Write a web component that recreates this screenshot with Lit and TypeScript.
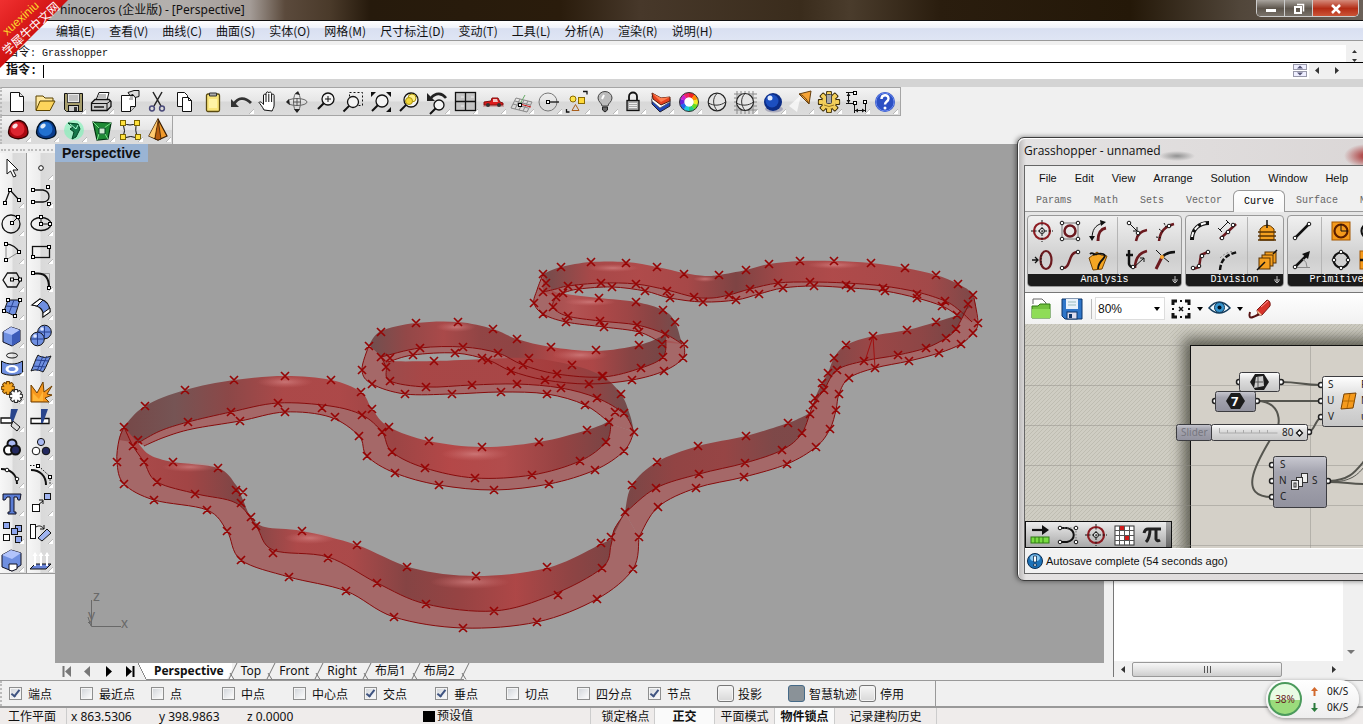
import { LitElement, html, svg, css } from "lit";
import { customElement } from "lit/decorators.js";
import { classMap } from "lit/directives/class-map.js";

type P = [number, number];

/* ---------- geometry helpers ---------- */

const parse = (s: string): P[] => s.trim().split(/\s+/).map((p) => p.split(",").map(Number) as P);

function curve(pts: P[], lead = "M"): string {
  let d = `${lead}${pts[0][0]},${pts[0][1]}`;
  for (let i = 0; i < pts.length - 1; i++) {
    const a = pts[i - 1] ?? pts[i];
    const b = pts[i];
    const c = pts[i + 1];
    const e = pts[i + 2] ?? c;
    const f = (n: number) => n.toFixed(1);
    d += `C${f(b[0] + (c[0] - a[0]) / 6)},${f(b[1] + (c[1] - a[1]) / 6)} ${f(c[0] - (e[0] - b[0]) / 6)},${f(c[1] - (e[1] - b[1]) / 6)} ${c[0]},${c[1]}`;
  }
  return d;
}

const band = (a: P[], b: P[]) => curve(a) + curve([...b].reverse(), "L") + "Z";

/* ---------- ribbon surface: wall (top/foot) and flange (foot/rim) ---------- */

interface Section { top: P[]; foot: P[]; rim: P[]; tone: string; }

const sections: Section[] = [
  {
    tone: "t1",
    top: parse("543,274 561,267 591,262 626,262 657,267 684,273 705,276 719,275 746,270 769,264 800,261 834,261 871,263 905,268 936,275 958,284 973,295 977,318"),
    foot: parse("543,292 556,289 568,286 601,283 636,284 667,290 694,297 712,298 729,295 750,289 778,283 810,282 846,283 883,286 917,292 945,301 959,310 972,322"),
    rim: parse("556,297 563,293 579,289 612,287 645,291 670,298 703,302 736,300 759,294 783,288 814,286 851,288 885,291 917,298 942,306 957,315"),
  },
  {
    tone: "t7",
    top: parse("546,283 553,291 566,294 599,298 636,302 663,310 675,322 682,344"),
    foot: parse("556,297 553,307 567,316 600,321 637,325 665,334 682,344"),
    rim: parse("543,274 537,290 534,303 543,314 566,322 604,327 639,332 660,342"),
  },
  {
    tone: "t6",
    top: parse("369,345 381,331 416,323 458,322 493,329 517,339 551,347 596,351 639,345 662,336 667,332"),
    foot: parse("381,357 420,348 463,347 498,353 523,365 557,374 603,377 641,368 663,357 666,340"),
    rim: parse("388,362 413,355 455,353 488,360 511,371 545,380 589,384 632,380 664,371 683,358 684,344"),
  },
  {
    tone: "t4",
    top: parse("119,440 124,427 145,406 185,390 234,380 285,376 331,380 361,392 372,409 389,427 429,441 482,447 539,442 587,430 609,421 614,413"),
    foot: parse("138,443 160,431 188,422 231,412 278,403 330,406 362,415 382,432 392,452 425,468 475,478 532,475 580,461 606,442 611,424"),
    rim: parse("144,446 165,437 192,429 240,421 285,412 330,417 359,436 367,456 395,473 439,485 494,490 549,484 595,470 624,451 634,432"),
  },
  {
    tone: "t5",
    top: parse("382,357 391,361 434,361 488,359 529,358 572,365 602,376 621,394 630,415 634,432"),
    foot: parse("381,357 386,367 390,381 426,387 472,385 517,384 561,388 597,398 624,414 634,432"),
    rim: parse("369,345 362,370 372,384 405,394 452,394 501,392 547,394 585,405 611,424"),
  },
  {
    tone: "t2",
    top: parse("972,306 957,315 936,322 907,330 873,336 846,345 834,358 828,373 822,383 815,398 810,412 800,418 788,423 746,436 698,446 657,462 632,485 625,512"),
    foot: parse("968,306 956,329 946,338 926,348 898,355 864,361 837,370 824,390 813,405 802,433 782,450 745,463 699,474 656,488 625,513"),
    rim: parse("974,298 978,323 973,333 961,344 939,353 909,361 875,368 849,378 839,394 836,410 830,429 816,447 787,464 744,477 696,488 658,507 639,537"),
  },
  {
    tone: "t3",
    top: parse("625,512 612,537 601,544 547,568 476,576 412,568 357,545 302,531 265,527 251,517 243,500 236,485 218,468 173,462 150,455 138,443 124,427"),
    foot: parse("625,513 614,530 611,545 602,568 552,595 494,611 426,604 377,583 328,557 273,550 256,526 236,503 197,494 157,482 144,462 133,446 124,427"),
    rim: parse("639,537 633,569 597,599 537,622 463,628 394,617 346,591 289,577 241,560 227,531 207,510 154,500 124,484 117,462 119,440 124,427"),
  },
];

const gradients: Record<string, [number, number, string[]]> = {
  t1: [543, 977, ["#704747", "#a84444", "#b04646", "#a74343", "#7c3f3f", "#a24343", "#b04646", "#ab4545", "#a24444", "#784444"]],
  t2: [625, 972, ["#774242", "#913f3f", "#964040", "#7c4444", "#7c4444", "#9b4242", "#8c4141", "#6c4141"]],
  t3: [133, 625, ["#ab4646", "#a24040", "#794141", "#ae4545", "#ab4545", "#843f3f", "#963e3e", "#ae4242", "#8e3f3f", "#744040"]],
  t4: [119, 614, ["#744242", "#735050", "#8b4343", "#ac4444", "#ad4444", "#9b4040", "#b54343", "#b34848", "#963e3e", "#744040"]],
  t5: [382, 634, ["#994848", "#a84242", "#a84242", "#a94242", "#a53d3d", "#924040", "#684a4a"]],
  t6: [369, 667, ["#6d4b4b", "#924343", "#aa4545", "#904040", "#8e3f3f", "#b14343", "#ad4242", "#863f3f", "#704242"]],
  t7: [546, 682, ["#a14a4a", "#b35050", "#ae4444", "#9e4141", "#863f3f", "#6d4b4b"]],
};

const glints: [number, number, number, number][] = [
  [613, 268, 26, 4], [705, 279, 12, 3], [835, 265, 28, 4], [456, 327, 20, 5], [580, 355, 28, 6],
  [590, 302, 26, 4], [285, 382, 28, 6], [475, 454, 34, 7], [190, 467, 28, 5], [310, 538, 26, 6], [470, 582, 40, 7],
];

const marks = parse(`
543,274 561,267 591,262 626,263 657,267 684,274 719,275 746,270 769,264 800,261 834,261 871,263 905,268 936,275 958,284 973,295
546,283 543,292 556,297 563,293 568,286 601,283 636,284 667,291 694,297 729,295 750,289 778,283 810,282 846,285 883,288 917,294 945,301 968,304
579,289 612,287 645,291 670,298 703,302 736,300 759,294 783,288 814,286 851,288 885,291 917,298 942,306 957,315
534,303 543,314 566,322 604,327 639,332 553,307 568,316 600,321 637,325 665,334 599,298 636,302 663,310 675,322 684,344
662,344 639,345 596,350 551,347 517,339 493,329 458,322 416,323 381,332 369,346 381,357 390,358 386,367 420,348 463,347 498,353 523,365 557,374 603,376
641,368 663,357 683,358 664,371 632,380 589,384 545,380 511,371 488,360 482,358 455,353 413,355 434,361 529,358 572,365 602,376 621,394
624,413 615,412 609,422 634,432 624,451 606,442 597,398 561,388 517,384 472,385 426,387 390,381 362,370 372,384 405,394 452,394 501,392 547,394 585,405
587,430 539,442 482,447 429,441 389,427 372,409 361,392 331,380 285,376 234,380 185,390 145,406 124,427 138,440 133,446
117,462 124,484 154,500 207,510 227,531 241,560 289,577 346,591 394,617 463,628 537,622 597,599 633,569 639,537 658,507
144,462 157,482 195,494 218,468 173,462 236,490 243,492 241,503 251,517 256,526 273,553 302,531 357,545 328,558 377,583 407,567 426,604 494,611 558,595 602,568 611,537 601,543 547,567 476,576 625,512
188,422 231,412 278,403 322,408 240,421 285,412 335,417 359,436 362,415 382,432 392,452 367,456 395,473 425,468 439,485 475,478 494,490 532,475 549,484 580,461 595,470
632,485 657,462 698,446 746,436 788,423 810,414 815,398 822,383 828,373 834,358 846,345 873,336 907,330 936,322
656,488 699,474 745,463 782,450 802,433 813,405 824,390 837,370 864,361 898,355 926,348 946,338 956,329
978,323 973,333 961,344 939,353 909,361 875,368 849,378 839,394 836,410 830,429 816,447 787,464 744,477 696,488`);

const scene = () => svg`
  <defs>
    ${Object.entries(gradients).map(([id, [x1, x2, stops]]) => svg`
      <linearGradient id=${id} gradientUnits="userSpaceOnUse" x1=${x1} x2=${x2} y1="0" y2="0">
        ${stops.map((c, i) => svg`<stop offset=${i / (stops.length - 1)} stop-color=${c}></stop>`)}
      </linearGradient>`)}
    <radialGradient id="glint"><stop offset="0" stop-color="#d88c8c" stop-opacity=".65"></stop><stop offset="1" stop-color="#d07070" stop-opacity="0"></stop></radialGradient>
  </defs>
  ${sections.map((s) => svg`
    <path d=${band(s.foot, s.rim)} fill="#a84e4e" fill-opacity=".68"></path>
    <path d=${band(s.top, s.foot)} fill=${`url(#${s.tone})`} fill-opacity=".95"></path>`)}
  ${glints.map(([x, y, rx, ry]) => svg`<ellipse cx=${x} cy=${y} rx=${rx} ry=${ry} fill="url(#glint)"></ellipse>`)}
  ${sections.map((s) => svg`<path d=${curve(s.foot) + curve(s.rim)} fill="none" stroke="#870b0b"></path>`)}
  <path d="M873,336L865,361M873,336L875,368" stroke="#a01010" fill="none"></path>
  <path d=${marks.map(([x, y]) => `M${x - 4},${y - 4}l8,8m0,-8l-8,8`).join("")} stroke="#960404" stroke-width="1.700"></path>
  <g stroke="#696969" fill="none"><path d="M91.500,600V626.500H121M88,617l3,9M92,626l-4,-4"></path></g>
  <g class="axis"><text x="93" y="601">z</text><text x="88" y="620">y</text><text x="121" y="628">x</text></g>`;

/* ---------- icons ---------- */

const K = "#111";
const sq = (x: number, y: number) => svg`<rect x=${x - 1.5} y=${y - 1.5} width="3" height="3" fill="#fff" stroke="#000"></rect>`;
const dot = (x: number, y: number) => svg`<circle cx=${x} cy=${y} r="1.800" fill="#fff" stroke="#111"></circle>`;
const more = (x: number, y: number) => svg`<path d=${`M${x},${y}v-5l-5,5z`} fill="#fff"></path><path d=${`M${x},${y - 5}l-5,5`} stroke="#999" stroke-width=".6"></path>`;
const lens = (x: number, y: number, r: number) => svg`<circle cx=${x} cy=${y} r=${r} fill="#f4f4f4" stroke=${K} stroke-width="1.300"></circle><path d=${`M${x - r * 0.7},${y + r * 0.7}L${x - r - 4},${y + r + 4}`} stroke=${K} stroke-width="2"></path>`;

const cog = (x: number, y: number, r: number, w: number, fill: string, line: string) => {
  const turns = [0, 45, 90, 135, 180, 225, 270, 315];
  const teeth = (c: string, g: number) => turns.map((t) => svg`<rect x=${x - w / 2 - g} y=${y - r - w * 0.8 - g} width=${w + g * 2} height=${w + g * 2} rx="1" fill=${c} transform=${`rotate(${t} ${x} ${y})`}></rect>`);
  return svg`${teeth(line, 0.9)}<circle cx=${x} cy=${y} r=${r + 0.9} fill=${line}></circle>${teeth(fill, 0)}<circle cx=${x} cy=${y} r=${r} fill=${fill}></circle>`;
};

const mainIcons: [string, boolean, unknown][] = [
  ["新建", false, svg`<path d="M7.500,4.500h9l4,4v15h-13z" fill="#fff" stroke=${K}></path><path d="M16.500,4.500v4h4" fill="#ddd" stroke=${K}></path>`],
  ["打开", false, svg`<path d="M5,22V8h7l2,2h8v4" fill="#ffe9a0" stroke="#5b4300"></path><path d="M5,22.500L9,13h15l-5,9.500z" fill="#fcd45c" stroke="#5b4300"></path>`],
  ["保存", true, svg`<path d="M5.500,5.500h18v18h-16l-2,-2z" fill="#a69d6c" stroke=${K}></path><rect x="8.500" y="5.500" width="12" height="9" fill="#e9e9e9" stroke="#444"></rect><path d="M10,8h9M10,10h9M10,12h9" stroke="#999"></path><rect x="9.500" y="17.500" width="10" height="6" fill="#ccc" stroke=${K}></rect><rect x="15" y="19" width="3" height="4" fill="#333"></rect>`],
  ["打印", true, svg`<path d="M9,12L12,4.500h10L20,12z" fill="#fff" stroke=${K}></path><path d="M12,7h7M11,9h8" stroke="#777"></path><path d="M4.500,15L8,11.500h14l2,2v5l-4,4h-15.500z" fill="#ccc" stroke=${K} stroke-width="1.300"></path><path d="M4.500,15.500H20v7M20,15.500l4,-3" fill="none" stroke=${K}></path><path d="M7,19h10" stroke="#444" stroke-width="2"></path>`],
  ["文件属性", false, svg`<path d="M6.500,7.500h14v11l-5,5h-9z" fill="#fff" stroke=${K}></path><path d="M15.500,23.500v-5h5" fill="#ccc" stroke=${K}></path><path d="M13,4.500l6,-2h5v6l-4,1l-2,-3l-3,1z" fill="#ddd" stroke=${K}></path><path d="M15,9h3M14,11h4" stroke="#777"></path>`],
  ["剪切", false, svg`<path d="M10,4L18,18M19,4L11,18" stroke="#222" stroke-width="1.500"></path><circle cx="9" cy="20.500" r="2.400" fill="none" stroke="#4a4a7a" stroke-width="1.500"></circle><circle cx="19" cy="20.500" r="2.400" fill="none" stroke="#4a4a7a" stroke-width="1.500"></circle>`],
  ["复制", false, svg`<path d="M6.500,4.500h7l3,3v11h-10z" fill="#fff" stroke=${K}></path><path d="M11.500,9.500h6l3,3v11h-9z" fill="#fff" stroke=${K}></path><path d="M17.500,9.500v3h3" fill="none" stroke=${K}></path>`],
  ["粘贴", false, svg`<rect x="7.500" y="6" width="13" height="17.500" rx="1.500" fill="#f9e57b" stroke="#5a4a10" stroke-width="1.300"></rect><path d="M10.500,8V5h7v3z" fill="#aaa" stroke="#333"></path><path d="M10,11h8v9h-8z" fill="#fff3a5"></path>`],
  ["撤销", true, svg`<path d="M7,16C11,9 18,9 24,15" fill="none" stroke="#333" stroke-width="2.800"></path><path d="M4,11v8h8z" fill="#333"></path>`],
  ["平移", false, svg`<path d="M9,22C7,18 5,16 4,14.500c1,-1.500 3,0 4.500,2V7c1,-1.500 2.200,-1 2.500,0V5c1,-1.500 2.400,-1.500 2.800,0V5c1,-1.500 2.400,-1 2.800,.500V7c1,-1.300 2.200,-1 2.500,.200V17c0,3 -1.500,4 -2,6z" fill="#fff" stroke=${K}></path><path d="M11,7v7M13.800,6v8M16.600,7v7" stroke=${K}></path>`],
  ["旋转视图", false, svg`<ellipse cx="14" cy="14" rx="10" ry="3.500" fill="none" stroke="#666"></ellipse><ellipse cx="14" cy="14" rx="3.500" ry="9.500" fill="none" stroke="#666"></ellipse><path d="M14,10v8M10,14h8" stroke="#555"></path><path d="M12,6l3,-3l2,4zM11,21l3,4l3,-4zM6,11l-3,3l4,3z" fill="#222"></path>`],
  ["缩放", false, svg`${lens(17, 11, 6)}<path d="M14,11h6M17,8v6" stroke=${K}></path>`],
  ["框选缩放", false, svg`<rect x="10.500" y="4.500" width="13" height="13" fill="none" stroke=${K} stroke-dasharray="2 2"></rect>${lens(14, 14, 5.5)}`],
  ["缩放至范围", false, svg`${lens(15, 13, 6)}<path d="M4,4h5l-5,5zM24,4h-5l5,5zM24,24h-5l5,-5z" fill=${K}></path>`],
  ["缩放至选取", false, svg`${lens(16, 12, 7)}<circle cx="17" cy="10" r="4" fill="#fff08a" stroke="#aa9410"></circle><circle cx="14" cy="13" r="3.500" fill="#f4d937" stroke="#aa9410"></circle>`],
  ["上一个视图", true, svg`${lens(16, 17, 5)}<path d="M8,10C13,4 19,5 23,10" fill="none" stroke="#222" stroke-width="2.600"></path><path d="M4,5v8h8z" fill="#222"></path>`],
  ["四个视图", true, svg`<rect x="4.500" y="4.500" width="20" height="18" fill="#c4c4c4" stroke=${K} stroke-width="1.300"></rect><path d="M14.500,4v19M4,13.500h21" stroke=${K} stroke-width="1.300"></path><path d="M10,9h3M20,9h3M10,18h3" stroke="#eee"></path>`],
  ["右视图", true, svg`<path d="M4,18h21" stroke="#b77"></path><path d="M5,17v-3l7,-1l1,-3h6l2,4l3,1v2z" fill="#dd1b1b" stroke="#851010"></path><path d="M14,11h4l1,3h-5z" fill="#f3c5c5"></path><circle cx="9" cy="17" r="2" fill="#333"></circle><circle cx="20" cy="17" r="2" fill="#333"></circle>`],
  ["设置工作平面", true, svg`<path d="M9,10L4,20L20,24L25,14z" fill="none" stroke="#888"></path><path d="M13,11l-5,10M17,12l-5,10M21,13l-5,10M8,13l15,4M6,16l15,4" stroke="#888"></path><path d="M13,16l11,3" stroke="#c11"></path><path d="M13,16l5,-9" stroke="#6a6"></path>${sq(13, 17)}`],
  ["物件锁点", true, svg`<circle cx="13" cy="14" r="9" fill="none" stroke="#777"></circle><path d="M13,14h11" stroke=${K} stroke-width="1.300"></path>${sq(13, 14)}`],
  ["选取", true, svg`<circle cx="10" cy="11" r="3" fill="#ffe54a" stroke="#8a6a00"></circle><rect x="15.500" y="9.500" width="6" height="6" fill="#ffd93a" stroke="#8a6a00"></rect><path d="M9,22.500l3.500,-6l3.500,6z" fill="none" stroke="#a85e1c"></path><path d="M20,3.500h4v3M3.500,21v3h3" fill="none" stroke=${K} stroke-width="1.300"></path>`],
  ["隐藏", true, svg`<path d="M11,18c0,-3 -4,-4 -4,-8a7,6.500 0 0 1 14,0c0,4 -4,5 -4,8z" fill="#bcbcbc" stroke="#444"></path><path d="M11,11l2,-4" stroke="#fff" stroke-width="2"></path><path d="M11.500,19h5v3l-2.500,2l-2.500,-2z" fill="#666" stroke="#222"></path>`],
  ["锁定", true, svg`<path d="M10,13V8.500a4,4 0 0 1 8,0V13" fill="none" stroke=${K} stroke-width="1.800"></path><rect x="8" y="12.500" width="12" height="10" fill="#aaa" stroke=${K} stroke-width="1.300"></rect><path d="M10,15.500h8M10,17.500h8M10,19.500h8" stroke="#eee"></path>`],
  ["图层", true, svg`<path d="M5,11l9,6l9,-4v5l-10,6l-8,-8z" fill="#2147b8" stroke="#223"></path><path d="M5,8l9,7l9,-4v3l-10,6l-8,-7z" fill="#fff" stroke="#555" stroke-width=".7"></path><path d="M5,5l9,5l9,-1v4l-9,4l-8,-6z" fill="#e7421f" stroke="#551a0a"></path><path d="M5,5l9,5l9,-1l-9,5z" fill="#ff7f50"></path>`],
  ["属性", true, svg`<g fill="none" stroke-width="5">${["#e22", "#f80", "#ee2", "#6d2", "#2c8", "#2cd", "#26e", "#62d", "#c2c", "#e26"].map((c, i) => svg`<path d="M14,7a7,7 0 0 1 4.300,1.400" stroke=${c} transform=${`rotate(${i * 36} 14 14)`}></path>`)}</g><circle cx="14" cy="14" r="4.500" fill="#fff"></circle><circle cx="14" cy="14" r="9.500" fill="none" stroke="#333"></circle>`],
  ["着色", false, svg`<circle cx="14" cy="14" r="8.800" fill="#e5e5e5" stroke="#222" stroke-width="1.200"></circle><path d="M14,5.500c-5,5 -4,12 0,17M5.500,15c5,3 12,3 17,-1" fill="none" stroke="#333"></path>`],
  ["线框", true, svg`<path d="M3,6h23M3,10h23M3,14h23M3,18h23M3,22h23M6,3v23M10,3v23M14,3v23M18,3v23M22,3v23" stroke="#888"></path><circle cx="14" cy="14" r="8.500" fill="#e5e5e5" stroke="#222" stroke-width="1.200"></circle><path d="M14,5.500c-5,5 -4,12 0,17M5.500,15c5,3 12,3 17,-1" fill="none" stroke="#333"></path>`],
  ["渲染", true, svg`<ellipse cx="15" cy="21" rx="9" ry="3.500" fill="#aab"></ellipse><circle cx="14" cy="14" r="9" fill="#0c2d86"></circle><circle cx="13" cy="13" r="6.500" fill="#1c4fc0"></circle><circle cx="11" cy="10" r="2.500" fill="#dfeaff"></circle>`],
  ["聚光灯", true, svg`<path d="M14,7L2,18L10,24z" fill="#fff" opacity=".7"></path><path d="M12,6L24,3L22,16z" fill="#f6a436" stroke="#664010"></path><path d="M12,6c4,1 8,5 10,10" fill="none" stroke="#664010"></path>`],
  ["选项", true, svg`${cog(14, 14, 7, 4, "#f3cf5b", "#3b2c08")}<rect x="11.500" y="6.500" width="5" height="9" rx="1" fill="#aaa" stroke="#444"></rect><path d="M9,17q5,3 10,0" fill="none" stroke="#9a7820"></path>`],
  ["尺寸标注", true, svg`<path d="M3,4.500h9M3,15.500h9M5.500,5v10M11.500,16v9M22.500,15v9M12,22.500h10" stroke=${K}></path><path d="M3.500,8l2,-3l2,3zM3.500,12l2,3l2,-3zM15,20.500l-3,2l3,2zM19,20.500l3,2l-3,2z" fill=${K}></path>${sq(12, 5)}${sq(12, 15)}${sq(22, 14)}`],
  ["说明", true, svg`<circle cx="14" cy="14" r="10" fill="#2c50c4"></circle><circle cx="14" cy="14" r="9" fill="none" stroke="#6b8af0"></circle><path d="M10.500,11c0,-5 7,-5 7,-.500c0,3 -3.500,3 -3.500,6" fill="none" stroke="#fff" stroke-width="2.400"></path><circle cx="14" cy="20" r="1.500" fill="#fff"></circle>`],
];

const dome = (a: string, b: string, c: string) => svg`<path d="M4.500,16C4.500,10 9,4.500 14.500,4.500S24,10 24,16C24,25 4.500,25 4.500,16z" fill=${a} stroke=${c} stroke-width="1.300"></path><ellipse cx="13.500" cy="13" rx="7" ry="7" fill=${b}></ellipse><ellipse cx="11" cy="10" rx="3" ry="2" fill="#fff" opacity=".85" transform="rotate(-35 11 10)"></ellipse>`;

const pluginIcons: [string, unknown][] = [
  ["红色", dome("#a80710", "#dd2530", "#300")],
  ["蓝色", dome("#0a3c8c", "#2271d0", "#012")],
  ["网格", svg`<circle cx="14" cy="14" r="10" fill="#78f3b4" opacity=".6"></circle><path d="M8,7l10,1l2,5l-4,8l-4,2l2,-7l-4,-3l3,-2z" fill="#17774a" stroke="#042"></path><path d="M10,8l6,5l2,-4" stroke="#a6ffd2" fill="none"></path>`],
  ["曲面", svg`<path d="M5,6l18,1l-3,16l-11,1z" fill="#1e8a35" stroke="#031" stroke-width="1.200"></path><path d="M5,6l6,6h5l7,-5M9,24l2,-6h6l3,5" stroke="#7be08b" fill="none"></path><path d="M11,12h6v6h-6z" fill="#cfe8d2" stroke="#042"></path>`],
  ["控制点", svg`<path d="M7,7q7,4 14,0q-3,7 1,15q-7,-3 -15,0q3,-7 0,-15z" fill="none" stroke=${K}></path>${[[7, 7], [21, 7], [7, 21], [22, 21]].map(([x, y]) => svg`<rect x=${x - 2.5} y=${y - 2.5} width="5" height="5" fill="#ffe23c" stroke="#7a6500"></rect>`)}`],
  ["金字塔", svg`<path d="M14,3L5,20l9,4l9,-4z" fill="#f09a2c" stroke="#3a1d00" stroke-width="1.200"></path><path d="M14,3l-3,20l3,1l3,-1z" fill="#b75c10" stroke="#3a1d00" stroke-width=".8"></path><path d="M14,3L5,20l5,2z" fill="#ffca72"></path>`],
];

const B = "#6f8fe0";
const tools: [string, unknown][] = [
  ["取消选取", svg`<path d="M7,3v15l3.500,-3l3,6l2.500,-1l-3,-6h5z" fill="#fff" stroke=${K}></path>`],
  ["单点", svg`<circle cx="12" cy="12" r="2.300" fill="#fff" stroke=${K}></circle>`],
  ["多重直线", svg`<path d="M5,19L10,6L19,16" fill="none" stroke=${K} stroke-width="1.300"></path>${sq(5, 19)}${sq(10, 6)}${sq(19, 16)}`],
  ["控制点曲线", svg`<path d="M4,6h10c8,2 8,11 0,12H4" fill="none" stroke=${K} stroke-width="1.300"></path>${sq(4, 6)}${sq(19, 3)}${sq(4, 18)}${sq(20, 20)}`],
  ["圆", svg`<circle cx="11" cy="12" r="9" fill="none" stroke=${K} stroke-width="1.300"></circle><path d="M12,11L18,5" stroke=${K}></path>${sq(12, 11)}${sq(18, 5)}`],
  ["椭圆", svg`<ellipse cx="12" cy="12" rx="10" ry="6.500" fill="none" stroke=${K} stroke-width="1.300"></ellipse><path d="M12,5v7h9" fill="none" stroke=${K}></path>${sq(12, 5)}${sq(12, 12)}${sq(21, 12)}`],
  ["圆弧", svg`<path d="M6,4c6,0 11,4 13,8" fill="none" stroke=${K} stroke-width="1.300"></path><path d="M6,4v16l13,-8" fill="none" stroke="#888"></path>${sq(6, 4)}${sq(19, 12)}${sq(6, 20)}`],
  ["矩形", svg`<rect x="3.500" y="6.500" width="17" height="11" fill="none" stroke=${K} stroke-width="1.300"></rect>${sq(20, 7)}${sq(4, 17)}`],
  ["多边形", svg`<path d="M3,12l4.500,-7h9l4,7l-4,7h-9z" fill="none" stroke=${K} stroke-width="1.300"></path><path d="M12,11.500h8" stroke=${K}></path>${sq(12, 11.5)}${sq(20, 11.5)}`],
  ["曲线圆角", svg`<path d="M4,5.500h16.500v14" fill="none" stroke="#999"></path><path d="M4,5.500h5c8,0 11,6 11,14" fill="none" stroke=${K} stroke-width="2"></path>${sq(4, 5)}${sq(20, 20)}`],
  ["曲面", svg`<path d="M8,4h12l-5,16L4,15z" fill=${B} stroke=${K}></path><path d="M14,4l-5,13M6,10l12,1" stroke="#27408f"></path>${sq(8, 4)}${sq(20, 4)}${sq(4, 15)}${sq(15, 20)}`],
  ["扫掠", svg`<path d="M3,9l8,-6c8,2 10,8 10,13l-7,5c1,-7 -3,-11 -11,-12z" fill=${B} stroke=${K} stroke-width="1.200"></path><path d="M3,9l8,-6l3,1l-6,6zM14,21l7,-5v-4l-7,5z" fill="#fff" stroke=${K}></path>`],
  ["立方体", svg`<path d="M3,8l8,-5l9,3v11l-8,5l-9,-4z" fill=${B} stroke="#112"></path><path d="M3,8l8,-5l9,3l-8,5z" fill="#b2c4fb"></path><path d="M12,11l8,-5v11l-8,5z" fill="#3c5bb8"></path>`],
  ["布尔运算", svg`<circle cx="15.500" cy="8" r="6.800" fill=${B} stroke=${K}></circle><circle cx="8.500" cy="15" r="6.800" fill=${B} stroke=${K}></circle><path d="M2,15h13M8.500,8.500v13M9,8h13M15.500,2v12" stroke="#27408f"></path><circle cx="6" cy="12" r="1.800" fill="#dfe7ff"></circle><circle cx="13" cy="5" r="1.800" fill="#dfe7ff"></circle>`],
  ["投影曲线", svg`<ellipse cx="12" cy="3.500" rx="5.500" ry="2.500" fill="none" stroke=${K}></ellipse><path d="M1.500,9c6,4 15,4 21,0v12c-6,3 -15,3 -21,0z" fill=${B} stroke=${K}></path><ellipse cx="12" cy="17" rx="6.500" ry="4" fill="#fff"></ellipse><ellipse cx="12" cy="17" rx="3.500" ry="2" fill=${B}></ellipse>`],
  ["网格", svg`<path d="M9,3c4,3 8,3 13,1c-3,5 -4,10 -8,16c-4,-2 -7,-3 -12,-1c3,-6 4,-11 7,-16z" fill=${B} stroke=${K}></path><path d="M14,4l-6,15M18,4l-7,15M7,8l13,1M4,14l13,1" stroke="#27408f"></path>`],
  ["炸开", svg`${cog(8, 8, 4, 2.5, "#f6a722", "#6b3d00")}${cog(16, 16, 4, 2.5, "#fff", "#222")}`],
  ["分解", svg`<path d="M2,22V5l6,8l6,-11l1,10l8,-6l-5,8l5,1l-7,3l4,4z" fill="#f7981d" stroke="#6b3d00"></path><path d="M4,21v-8l6,6l4,-8v10z" fill="#ffb637"></path>`],
  ["修剪", svg`<path d="M1,10h11v5H1z" fill="#fff" stroke=${K} stroke-width="1.300"></path><path d="M13,13l7,6l-3,4l-6,-5z" fill="#ddd" stroke=${K}></path><path d="M11,1h7l-5,13l-3,-4z" fill="#29458c"></path>`],
  ["分割", svg`<path d="M2,10.500h18v5H2z" fill="#fff" stroke=${K} stroke-width="1.300"></path><path d="M12,1h7l-5,14h-2z" fill="#29458c"></path>`],
  ["群组", svg`<circle cx="12" cy="8" r="4.500" fill="#a9b9f2" stroke=${K} stroke-width="2"></circle><circle cx="8.500" cy="14" r="4.500" fill="#fff" stroke=${K} stroke-width="2"></circle><circle cx="15.500" cy="14" r="4.500" fill="#22285f" stroke=${K} stroke-width="2"></circle>`],
  ["解散群组", svg`<circle cx="12" cy="6" r="3.600" fill="#a9b9f2" stroke=${K}></circle><circle cx="7" cy="15" r="3.800" fill="#fff" stroke=${K}></circle><circle cx="17" cy="15" r="3.800" fill="#22285f" stroke=${K}></circle>`],
  ["编辑点", svg`<path d="M1,5c9,0 16,5 16,15" fill="none" stroke=${K} stroke-width="2"></path>${dot(7, 6)}${dot(17, 15)}`],
  ["控制点", svg`<path d="M2,6c9,0 15,6 15,15" fill="none" stroke=${K} stroke-width="2"></path><path d="M1,1.500h8l12,11v8" fill="none" stroke=${K} stroke-dasharray="1.500 1.500"></path>${sq(9, 2)}${sq(21, 13)}`],
  ["文字物件", svg`<path d="M3,2h18l-1,6h-2l-1,-3h-3v15h2v2H8v-2h2V5H7L5,8H3z" fill="#5a7cd4" stroke="#112"></path>`],
  ["移动", svg`<rect x="15.500" y="1.500" width="6" height="6" fill="#9fb3f0" stroke=${K}></rect><rect x="3.500" y="12.500" width="7" height="7" fill="#fff" stroke=${K}></rect><path d="M9,13l5,-4M14,12V8h-4" stroke=${K} fill="none"></path>`],
  ["复制物件", svg`<g fill="#8ea6ee" stroke=${K}><rect x="3.500" y="2.500" width="6" height="6"></rect><rect x="15.500" y="5.500" width="6" height="6"></rect><rect x="11.500" y="8.500" width="6" height="6"></rect><rect x="15.500" y="16.500" width="6" height="6"></rect><rect x="3.500" y="14.500" width="6" height="6" fill="#fff"></rect></g>`],
  ["旋转", svg`<rect x="1.500" y="4.500" width="5" height="14" fill="#fff" stroke=${K}></rect><path d="M9,18l9,-9l4,4l-9,8z" fill="#9fb3f0" stroke=${K}></path><path d="M7,7c3,-2 6,-1 8,2M15,5v4h-4" fill="none" stroke=${K}></path>`],
  ["实体编辑", svg`<path d="M2,7l9,-5l10,3v12l-9,6l-10,-4z" fill=${B} stroke="#112"></path><path d="M2,7l9,-5l10,3l-9,6z" fill="#b2c4fb"></path><path d="M9,16h8v5l-5,2l-3,-1z" fill="#fff" stroke="#112"></path>`],
  ["法线方向", svg`<path d="M1,21l5,-5h16l-5,5z" fill="#6883d6" stroke=${K}></path><path d="M6,18V5M12,18V5M18,18V5" stroke="#fff" stroke-width="2"></path><path d="M3.500,8L6,4l2.500,4M9.500,8L12,4l2.500,4M15.500,8L18,4l2.500,4" fill="#fff"></path>`],
];

const R = "#6b1a1f";
const target = svg`<circle cx="14" cy="14" r="8" fill="none" stroke="#8c1c22" stroke-width="2.200"></circle><circle cx="14" cy="14" r="2.500" fill="#fff" stroke=${K}></circle><path d="M14,3v22M3,14h22" stroke=${K} stroke-dasharray="2 1.500"></path>`;
const ribbonGroups: { name: string; blocks: [string, unknown][][] }[] = [
  {
    name: "Analysis",
    blocks: [
      [
        ["Center", target],
        ["Control Polygon", svg`<rect x="6" y="6" width="16" height="16" fill="none" stroke="#777"></rect><circle cx="14" cy="14" r="5.500" fill="none" stroke=${R} stroke-width="2.500"></circle>${dot(6, 6)}${dot(22, 6)}${dot(6, 22)}${dot(22, 22)}`],
        ["Curvature", svg`<path d="M14,24c0,-9 3,-12 8,-13" fill="none" stroke=${R} stroke-width="3"></path><path d="M8,22c0,-9 3,-14 11,-16" fill="none" stroke=${K}></path><path d="M16,3l6,2l-5,4zM5,19l3,5l3,-5z" fill=${K}></path>`],
        ["Closed", svg`<ellipse cx="18" cy="14" rx="5.500" ry="9" fill="none" stroke=${R} stroke-width="2.200"></ellipse><path d="M4,14h5M7,11l3,3l-3,3" fill="none" stroke=${K} stroke-width="1.300"></path><path d="M13,9v10" stroke=${K} stroke-dasharray="1.500 1.500"></path>`],
        ["End Points", svg`<path d="M6,22c10,1 5,-16 16,-16" fill="none" stroke=${R} stroke-width="2.500"></path>${dot(6, 22)}${dot(22, 6)}`],
        ["Frame", svg`<path d="M5,12l8,-6l4,3l6,1l-5,13l-9,1z" fill="#f5a623" stroke="#774400"></path><path d="M6,8c3,-3 4,2 7,0M9,9c9,-3 15,-1 10,4c-3,3 -5,6 -5,10" fill="none" stroke=${K} stroke-width="1.800"></path>`],
      ],
      [
        ["Closest Point", svg`<path d="M13,24c1,-7 5,-10 11,-11" fill="none" stroke=${R} stroke-width="2.500"></path><path d="M6,6l8,8M14,10v4h-4" fill="none" stroke=${K}></path>${dot(6, 6)}${dot(15, 16)}`],
        ["Evaluate Length", svg`<path d="M8,24c1,-10 7,-15 15,-17" fill="none" stroke=${R} stroke-width="2.500"></path><path d="M5,20l6,1M8,12l4,3M13,6l2,4" stroke=${K} stroke-dasharray="2 1"></path>${dot(18, 9)}`],
        ["Evaluate", svg`<path d="M6,4v14q1,4 5,2M3,9h7" fill="none" stroke=${K} stroke-width="2.500"></path><path d="M12,22c0,-10 4,-15 12,-17" fill="none" stroke=${R} stroke-width="2.500"></path><path d="M10,22l11,-10M21,16v-4h-4" fill="none" stroke=${K}></path>${dot(10, 21)}`],
        ["Discontinuity", svg`<path d="M5,23l6,-12" stroke=${R} stroke-width="3"></path><path d="M11,11c4,-4 8,-5 13,-5" fill="none" stroke=${K} stroke-width="2.500"></path><path d="M5,4l7,7M18,16l-6,-5" stroke=${K}></path><circle cx="11" cy="11" r="2" fill="#fa3"></circle>`],
      ],
    ],
  },
  {
    name: "Division",
    blocks: [
      [
        ["Divide Curve", svg`<path d="M6,23c0,-11 7,-17 17,-17" fill="none" stroke=${K} stroke-width="4"></path><path d="M6,20c1,-8 7,-13 14,-14" fill="none" stroke="#fff" stroke-width="2" stroke-dasharray="5 3"></path>`],
        ["Divide Distance", svg`<path d="M6,22L22,7" stroke=${R} stroke-width="2.500"></path><path d="M6,13l8,-8M4,11l4,4M12,3l4,4" fill="none" stroke=${K}></path>${dot(8, 21)}${dot(14, 15)}${dot(19, 8)}`],
        ["Divide Length", svg`<path d="M7,23l6,-2l2,-12l7,-3" fill="none" stroke=${R} stroke-width="2.500"></path>${dot(7, 22)}${dot(13, 20)}${dot(16, 10)}${dot(22, 6)}`],
        ["Dash Pattern", svg`<path d="M6,24c1,-11 7,-16 18,-18" fill="none" stroke=${K} stroke-width="2.500" stroke-dasharray="5 2"></path><path d="M6,12c4,-4 8,-6 14,-7" fill="none" stroke="#888" stroke-dasharray="2 2"></path>`],
      ],
      [
        ["Contour", svg`<path d="M7,12q7,-8 14,0v11H7z" fill="#f5a020" stroke="#5b3300"></path><path d="M5,15h18M5,19h18M5,23h18" stroke="#5b3300" stroke-width="1.500"></path><path d="M14,3v8" stroke=${K} stroke-width="1.500"></path>`],
        ["Perp Frames", svg`<g fill="#f5a020" stroke="#5b3300"><rect x="12" y="6" width="11" height="11"></rect><rect x="9" y="9" width="11" height="11"></rect><rect x="6" y="12" width="11" height="11"></rect></g><path d="M4,24L12,16M20,8l4,-4" stroke=${K} stroke-width="1.500"></path>`],
      ],
    ],
  },
  {
    name: "Primitive",
    blocks: [
      [
        ["Line", svg`<path d="M7,21L21,7" stroke=${K} stroke-width="2.500"></path>${dot(7, 21)}${dot(21, 7)}`],
        ["Line SDL", svg`<path d="M7,21L19,9" stroke=${K} stroke-width="2.500"></path><path d="M22,5l-2,8l-6,-5z" fill=${K}></path><path d="M7,21.500h15M15,13q4,3 4,8" fill="none" stroke="#888"></path>${dot(7, 21)}`],
      ],
      [
        ["Arc", svg`<rect x="5" y="5" width="18" height="18" fill="#f59a1c" stroke="#a35600"></rect><circle cx="14" cy="14" r="6.500" fill="none" stroke="#5c1f00" stroke-width="2.200"></circle><path d="M14,7v7h7" fill="none" stroke=${K}></path>`],
        ["Ellipse", svg`<circle cx="14" cy="14" r="7.500" fill="none" stroke=${K} stroke-width="2.200"></circle>`],
        ["Circle", svg`<circle cx="14" cy="14" r="7.500" fill="none" stroke=${K} stroke-width="2.200"></circle>${dot(14, 6)}${dot(7, 14)}${dot(21, 14)}${dot(14, 22)}`],
        ["Rectangle", svg`<rect x="5" y="5" width="18" height="18" fill="#f59a1c" stroke="#a35600"></rect><path d="M5,14h18" stroke=${K} stroke-width="2.500"></path>`],
      ],
    ],
  },
];

const paletteIcons: [string, unknown][] = [
  ["Number", svg`<path d="M6,9h12" stroke=${K} stroke-width="2.200"></path><path d="M16,4l7,5l-7,5z" fill=${K}></path><rect x="5" y="16" width="18" height="6" fill="#79dd42" stroke="#2f7a13"></rect><path d="M9,16v6M13,16v6M17,16v6" stroke="#2f7a13"></path>`],
  ["Curve", svg`<path d="M7,7h6c9,2 9,12 0,14H7" fill="none" stroke=${K} stroke-width="2"></path><path d="M7,7h15M22,7v14" stroke="#777" stroke-dasharray="1.500 1.500"></path>${dot(6, 7)}${dot(6, 21)}${dot(22, 7)}${dot(22, 21)}`],
  ["Center", target],
  ["Grid", svg`<rect x="5" y="5" width="19" height="19" fill="#fff" stroke="#333"></rect><path d="M10,5h4v4h-4zM15,15h5v5h-5z" fill="#d01a1a"></path><path d="M9.500,5v19M14.500,5v19M19.500,5v19M5,9.500h19M5,14.500h19M5,19.500h19" stroke="#555"></path>`],
  ["Pi", svg`<path d="M6,12q1,-4 4,-4h13M12,8q0,9 -4,13M18,8v10q1,3 4,1" fill="none" stroke="#222" stroke-width="3"></path>`],
];

const icon = (art: unknown, size = 28) => html`<svg width=${size} height=${size} viewBox="0 0 ${size} ${size}" aria-hidden="true">${art}</svg>`;
const caret = html`<svg width="6" height="4" viewBox="0 0 6 4" aria-hidden="true"><path d="M0,0h6l-3,4z"></path></svg>`;

/* ---------- shared control reset ---------- */

const base = css`
  * { box-sizing: border-box; }
  svg { display: block; flex: none; }
  button, select, input { font: inherit; color: inherit; margin: 0; padding: 0; border: 0; background: none; border-radius: 0; }
  button { display: block; cursor: default; flex: none; white-space: nowrap; }
`;

/* ---------- node editor window ---------- */

@customElement("gh-window")
export class GhWindow extends LitElement {
  static styles = [base, css`
    :host { display: flex; flex-direction: column; border: 1px solid #3c3c3c; border-radius: 7px 0 0 7px; padding: 0 0 6px 6px;
      background: linear-gradient(90deg, #b5b3b3, #e4e2e2 8px, #d5d0d0); box-shadow: -1px 0 5px rgba(0,0,0,.5), inset 1px 1px 0 #fff;
      font: 11px/14px "Liberation Sans", sans-serif; color: #111; }
    .title { height: 27px; flex: none; font: 12px/26px "Open Sans", sans-serif; display: flex; overflow: hidden;
      background: radial-gradient(ellipse 18px 5px at 153px 18px, #999 10%, transparent), radial-gradient(ellipse 22px 12px at 342px 18px, #b24f4f 20%, transparent); }
    .inner { flex: 1; display: flex; flex-direction: column; border: 1px solid #666; border-right: 0; background: #f0f0f0; overflow: hidden; min-height: 0; }
    .menu { display: flex; gap: 18px; height: 24px; padding-left: 14px; align-items: center; flex: none; }
    .tabs { display: flex; height: 22px; flex: none; font: 10px/22px "Liberation Mono", monospace; color: #666; border-bottom: 1px solid #999; }
    .tab { padding: 0 11px; height: 22px; }
    .tab.on { color: #000; background: linear-gradient(#fff, #f6f6f6); border: 1px solid #999; border-bottom: 0; border-radius: 6px 6px 0 0; padding: 0 10px; line-height: 18px; }
    .groups { display: flex; gap: 3px; padding: 3px 2px 5px; flex: none; border-bottom: 1px solid #777; background: #e6e6e6; }
    .group { flex: none; border: 1px solid #999; border-radius: 4px; background: linear-gradient(#f0f0f0, #cfcfcf 60%, #e0e0e0); overflow: hidden; }
    .blocks { display: flex; height: 58px; padding-top: 1px; }
    .block { display: grid; grid-auto-flow: row; padding: 0 5px 0 0; }
    .block + .block { border-left: 1px solid #b5b5b5; padding: 0 2px 0 5px; }
    .c1 { grid-template-columns: 28px; } .c2 { grid-template-columns: 28px 28px; } .c3 { grid-template-columns: 28px 28px 28px; }
    .name { background: #1b1b1b; color: #fff; font: 10px/12px "Liberation Mono", monospace; height: 12px; display: flex; justify-content: center; position: relative; }
    .name svg { position: absolute; right: 2px; top: 2px; }
    .bar { display: flex; align-items: center; gap: 2px; height: 31px; flex: none; background: linear-gradient(#fff, #f1f1f1); padding-left: 2px; }
    .rule { width: 1px; height: 20px; background: #bbb; margin: 0 1px 0 4px; }
    .zoom { display: flex; align-items: center; width: 70px; height: 23px; border: 1px solid #ddd; background: #fff; padding-right: 4px; }
    .zoom select { appearance: none; flex: 1; min-width: 0; padding-left: 2px; font-size: 12px; outline: 0; }
    .canvas { flex: 1; min-height: 0; position: relative; background: #cfcdc3; overflow: hidden; }
    .palette { position: absolute; left: 0; bottom: 0; display: flex; border: 1px solid #111; background: linear-gradient(#ececec, #a9a9a9); width: 147px; height: 27px; align-items: center; }
    .palette::after { content: ""; flex: 1; height: 100%; background: linear-gradient(#aaa, #666); }
    .status { display: flex; align-items: center; gap: 2px; height: 25px; flex: none; padding-left: 1px; background: #f2f2f2; border-top: 1px solid #fff; }
    text { font: 10px "Noto Sans", sans-serif; fill: #222; }
    .big { font: bold 13px "Noto Sans", sans-serif; fill: #fff; }
    .dim { fill: #77777f; }
  `];

  render() {
    return html`
      <div class="title">Grasshopper - unnamed</div>
      <div class="inner">
        <nav class="menu">${["File", "Edit", "View", "Arrange", "Solution", "Window", "Help"].map((m) => html`<button>${m}</button>`)}</nav>
        <nav class="tabs">${["Params", "Math", "Sets", "Vector", "Curve", "Surface", "Mesh"].map((t) => html`<button class=${classMap({ tab: true, on: t === "Curve" })}>${t}</button>`)}</nav>
        <div class="groups">
          ${ribbonGroups.map((g) => html`<section class="group">
            <div class="blocks">${g.blocks.map((b) => html`<div class="block c${b.length / 2}">${b.map(([n, a]) => html`<button aria-label=${n}>${icon(a)}</button>`)}</div>`)}</div>
            <div class="name">${g.name}<svg width="8" height="8" viewBox="0 0 8 8"><path d="M4,0v7M1,4h6M2,5l2,2l2,-2" fill="none" stroke="#bbb"></path></svg></div>
          </section>`)}
        </div>
        <div class="bar">
          <button aria-label="Open">${icon(svg`<path d="M6,9V4h9l4,4v7" fill="#fff" stroke="#666"></path><path d="M5,23V11h6l2,-2h10v14z" fill="#72c13e" stroke="#2f7a13"></path><path d="M5,23V14h18v9z" fill="#8fdc58"></path>`)}</button>
          <button aria-label="Save">${icon(svg`<path d="M5,4h20v20H8l-3,-3z" fill="#2f76c9" stroke="#0d3468"></path><rect x="9" y="4" width="12" height="10" fill="#e8f1fb"></rect><path d="M11,7h8M11,10h8" stroke="#9bb"></path><rect x="10" y="17" width="10" height="7" fill="#dde" stroke="#0d3468"></rect><rect x="12" y="19" width="3" height="4" fill="#0d3468"></rect>`)}</button>
          <span class="rule"></span>
          <label class="zoom"><select aria-label="Zoom"><option>80%</option></select>${caret}</label>
          <button aria-label="Zoom Extents">${icon(svg`<path d="M10,6H6v4M18,6h4v4M22,18v4h-4M10,22H6v-4" fill="none" stroke="#111" stroke-width="3"></path><path d="M12,12l4,4M16,12l-4,4" stroke="#111" stroke-width="1.500"></path><path d="M13,6h2M13,22h2M6,13v2M22,13v2" stroke="#111" stroke-width="2"></path>`)}</button>
          ${caret}
          <button aria-label="Named Views">${icon(svg`<path d="M4,14q10,-12 21,0q-11,10 -21,0z" fill="#eef8fd" stroke="#123b5c" stroke-width="1.500"></path><circle cx="14.500" cy="13.500" r="5" fill="#3695cf" stroke="#123b5c"></circle><circle cx="14.500" cy="13.500" r="2" fill="#012"></circle>`, 30)}</button>
          ${caret}
          <button aria-label="Sketch">${icon(svg`<path d="M13,20l-1,-5L22,5q4,1 3,6l-8,9z" fill="#d8352c" stroke="#7a1712"></path><path d="M13,20l-1,-5l5,5z" fill="#f3c99c"></path><path d="M5,17q-2,7 3,5t6,-3" fill="none" stroke="#511" stroke-width="2"></path><path d="M16,12l7,-6" stroke="#f99"></path>`)}</button>
        </div>
        <div class="canvas">
          <svg width="340" height="226" viewBox="1025 324 340 226">
            <defs>
              <pattern id="hatch" width="4" height="4" patternUnits="userSpaceOnUse"><path d="M0,4L4,0" stroke="#bfbdb2"></path></pattern>
              <filter id="soft" x="-20%" y="-20%" width="150%" height="150%"><feGaussianBlur stdDeviation="7"></feGaussianBlur></filter>
              <linearGradient id="node" x2="0" y2="1"><stop offset="0" stop-color="#fff"></stop><stop offset=".4" stop-color="#ddd"></stop><stop offset="1" stop-color="#c6c6c6"></stop></linearGradient>
              <linearGradient id="sel" x2="0" y2="1"><stop offset="0" stop-color="#c9c9d1"></stop><stop offset=".3" stop-color="#a5a5b0"></stop><stop offset="1" stop-color="#92929e"></stop></linearGradient>
            </defs>
            <rect x="1025" y="324" width="340" height="226" fill="url(#hatch)"></rect>
            <rect x="1183" y="338" width="240" height="240" fill="#44443a" opacity=".8" filter="url(#soft)"></rect>
            <rect x="1190.500" y="345.500" width="240" height="240" fill="#d4d0c8" stroke="#111"></rect>
            <path d="M1070.500,324v226M1310.500,346v204M1025,345.500h165M1025,385.500h340M1025,425.500h340M1025,465.500h340M1025,505.500h340M1025,545.500h340" stroke="#8d8b84" stroke-opacity=".45"></path>
            <g fill="none" stroke="#55554f" stroke-width="2">
              <path d="M1281,382C1300,382 1302,385 1321,385M1257,401H1321M1257,401C1285,401 1282,432 1270,440C1255,465 1238,497 1272,497M1309,432C1315,430 1314,422 1321,417M1329,481C1350,480 1355,472 1365,460M1329,482C1345,482 1350,484 1365,484"></path>
              <path d="M1329,482C1352,482 1358,474 1365,466" stroke-width="1"></path>
            </g>
            <g fill="#fff" stroke="#222" stroke-width="1.500">
              ${[[1239, 382], [1281, 382], [1215, 401], [1257, 401], [1321, 385], [1321, 401], [1321, 417], [1309, 432], [1272, 465], [1272, 481], [1272, 497], [1328, 481]].map(([x, y]) => svg`<circle cx=${x} cy=${y} r="2.500"></circle>`)}
            </g>
            <g stroke="#3c3c40">
              <rect x="1239.500" y="372.500" width="40" height="19" rx="2" fill="url(#node)"></rect>
              <rect x="1215.500" y="391.500" width="40" height="20" rx="2" fill="url(#sel)"></rect>
              <rect x="1322.500" y="376.500" width="60" height="50" rx="2" fill="url(#node)"></rect>
              <rect x="1211.500" y="424.500" width="96" height="16" rx="2" fill="url(#node)"></rect>
              <rect x="1176.500" y="424.500" width="35" height="16" rx="2" fill="url(#sel)"></rect>
              <rect x="1273.500" y="456.500" width="53" height="51" rx="2" fill="url(#sel)"></rect>
            </g>
            <path d="M1250,382l5,-8h9l5,8l-5,8h-9zM1226,401l5,-8h9l5,8l-5,8h-9z" fill="#1c1c1c"></path>
            <path d="M1256,377l7,-1l1,10l-10,2z" fill="#ccc"></path><path d="M1258,377v10M1255,382h8" stroke="#555"></path>
            <text class="big" x="1231" y="406">7</text>
            <path d="M1344,394l12,-1l-3,15l-12,1z" fill="#f59a1c" stroke="#7a4200"></path><path d="M1350,394l-3,14M1343,401h12" stroke="#b56a00"></path>
            <text x="1328" y="388">S</text><text x="1327" y="404">U</text><text x="1328" y="420">V</text>
            <text x="1361" y="388">P</text><text x="1361" y="404">N</text><text x="1361" y="420">uv</text>
            <text class="dim" x="1181" y="436">Slider</text><text x="1282" y="436">80</text>
            <path d="M1219.500,428v5h58M1227.500,430v3M1235.500,430v3M1243.500,430v3M1251.500,430v3M1259.500,430v3M1267.500,430v3" fill="none" stroke="#aaa"></path>
            <path d="M1296.500,433l3,-3l3,3l-3,3z" fill="#fff" stroke="#111" stroke-width="1.300"></path>
            <text x="1280" y="468">S</text><text x="1279" y="484">N</text><text x="1280" y="500">C</text><text x="1312" y="484">S</text>
            <g fill="#eee" stroke="#333"><rect x="1301.500" y="473.500" width="6" height="9"></rect><rect x="1296.500" y="477.500" width="6" height="9"></rect><rect x="1291.500" y="480.500" width="7" height="9"></rect></g>
            <rect x="1294" y="483" width="2" height="4" fill="none" stroke="#333"></rect>
          </svg>
          <div class="palette">${paletteIcons.map(([n, a]) => html`<button aria-label=${n}>${icon(a)}</button>`)}</div>
        </div>
        <div class="status">
          <svg width="18" height="18" viewBox="0 0 18 18"><circle cx="9" cy="9" r="7.500" fill="#1d72b8" stroke="#0a2c50"></circle><ellipse cx="9" cy="6" rx="5" ry="3.500" fill="#8cc8ee"></ellipse><path d="M7.500,4h3v6h-3zM7.500,12h3v2h-3z" fill="#fff" stroke="#0a2c50" stroke-width=".8"></path></svg>
          <span>Autosave complete (54 seconds ago)</span>
        </div>
      </div>`;
  }
}

/* ---------- application shell ---------- */

@customElement("app-root")
export class AppRoot extends LitElement {
  static styles = [base, css`
    :host { display: flex; flex-direction: column; position: relative; height: 100vh; overflow: hidden; background: #f0f0f0; color: #111;
      font: 12px/16px "Noto Sans", "Noto Sans CJK SC", sans-serif; }
    .title { flex: none; height: 21px; display: flex; align-items: flex-start; justify-content: space-between; padding: 0 4px 0 60px; line-height: 20px; border-bottom: 1px solid #111;
      background: linear-gradient(90deg, #aaa 60px, #b4b0ad 170px, #a49c97 250px, #5b4a3c 285px, #4a3a2a 330px, #261a0c 370px, #2a1c0c 560px, #47382a 640px, #3a2c1c 800px, #4a3c2c 850px, #2a1d0e 940px, #241808 1130px, #51463a 1240px, #6a6058); }
    .caps { display: flex; height: 17px; border: 1px solid #ccc; border-top: 0; border-radius: 0 0 5px 5px; overflow: hidden; }
    .caps button { width: 28px; height: 17px; display: grid; place-items: center; background: linear-gradient(#a9a49e, #5d554c 50%, #7d766e); border-right: 1px solid #ccc; }
    .caps button:last-child { width: 45px; border: 0; background: linear-gradient(#d58b7b, #b32c15 50%, #cf5a3c); }
    .menu { flex: none; height: 20px; display: flex; gap: 14px; padding-left: 56px; align-items: center; border-bottom: 1px solid #999; background: linear-gradient(#fff, #f0f3fa 35%, #d9e0f1 40%, #dfe5f4);
      font-family: "Noto Sans CJK SC", sans-serif; }
    .cmd { flex: none; border-top: 4px solid #f0f0f0; border-bottom: 8px solid #d4d4d4; height: 46px; display: flex; flex-direction: column; background: #fff; font: 10px/16px "Liberation Mono", "Noto Sans CJK SC", monospace; }
    .hist { height: 18px; padding-left: 6px; border-bottom: 1px solid #000; display: flex; justify-content: space-between; }
    .cjk { font-size: 12px; }
    .entry { height: 16px; padding-left: 6px; display: flex; align-items: center; }
    .entry label { font-size: 12px; font-weight: bold; }
    .entry input { flex: 1; min-width: 0; outline: 0; height: 13px; border-left: 1px solid #000; margin-left: 6px; }
    .row { flex: none; display: flex; }
    .strip { display: flex; height: 29px; padding-left: 1px; border: 1px solid #a5a5a5; border-left: 2px dotted #bbb; background: linear-gradient(#f3f3f3, #e6e6e6 48%, #d8d8d8 52%, #dcdcdc); overflow: hidden; }
    .strip.second { height: 28px; border-top: 0; border-bottom: 0; padding-left: 2px; }
    .main { flex: 1; min-height: 0; display: flex; border-bottom: 1px solid #999; }
    .left { flex: none; width: 55px; }
    .grip { display: grid; grid-template-columns: 27px 28px; height: 9px; padding-top: 5px; background: #efefef; }
    .grip i { border-top: 2px dotted #bbb; margin: 0 2px 0 1px; }
    .tools { display: grid; grid-template-columns: 27px 28px; border-bottom: 1px solid #999; background: linear-gradient(90deg, #f7f7f7, #ececec 12px, #d9d9d9 13px, #dedede 26px, #999 26px, #999 27px, #f7f7f7 27px, #ececec 40px, #d9d9d9 41px, #dedede); }
    .tools button { height: 28px; padding: 2px 0 0 0; }
    .tools button:nth-child(even) { padding-left: 2px; }
    .center { flex: 1; min-width: 0; display: flex; flex-direction: column; }
    .view { flex: 1; min-height: 0; background: #9f9f9f; display: grid; }
    .view > * { grid-area: 1 / 1; }
    .view svg { width: 100%; height: 100%; }
    .vlabel { justify-self: start; align-self: start; background: #9ab4d4; padding: 0 7px; font: bold 14px/18px "Liberation Sans", sans-serif; color: #111; z-index: 1; }
    .axis text { font: 14px "Liberation Sans", sans-serif; fill: #696969; }
    .sheets { flex: none; display: flex; height: 17px; padding-left: 7px; align-items: center; }
    .sheets .nav { width: 21px; height: 17px; display: grid; place-items: center start; }
    .sheet { position: relative; height: 17px; padding: 0 9px; line-height: 14px; border-bottom: 1px solid #888; }
    .sheet svg { position: absolute; right: -6px; top: 0; z-index: 1; }
    .sheet.on { font-weight: bold; background: #fff; padding: 0 8px; }
    .sheet.on::before { content: ""; position: absolute; left: -8px; top: 0; width: 8px; height: 16px; background: linear-gradient(to top right, transparent 46%, #888 47%, #888 53%, #fff 54%); }
    .side { flex: none; width: 259px; padding: 0 3px 3px 9px; display: flex; }
    .pane { flex: 1; display: grid; grid-template: 1fr 16px / 1fr 17px; border-left: 1px solid #777; }
    .sheetpane { background: #fff; }
    .hs { display: flex; justify-content: space-between; align-items: center; padding: 0 5px; background: #f0f0f0; }
    .thumb { width: 150px; height: 15px; border: 1px solid #999; border-radius: 2px; background: linear-gradient(#f7f7f7, #e4e4e4 50%, #cdcdcd); display: grid; place-items: center; margin: 0 auto 0 4px; }
    .vs { display: flex; align-items: flex-end; justify-content: center; padding-bottom: 5px; background: #f0f0f0; }
    .snap { flex: none; display: flex; height: 26px; border-bottom: 1px solid #999; font-family: "Noto Sans CJK SC", sans-serif; }
    .snaps { display: grid; grid-template-columns: repeat(13, 71px); padding: 0 3px 0 7px; border-left: 2px dotted #bbb; border-right: 1px solid #999; align-items: center; }
    .snaps label { display: flex; align-items: center; gap: 6px; white-space: nowrap; }
    .snaps input { appearance: none; flex: none; width: 13px; height: 13px; border: 1px solid #8e8f8f; background: linear-gradient(135deg, #cfd3d8, #fff); box-shadow: inset 0 0 0 1px #f4f4f4; display: grid; place-items: center; }
    .snaps input:checked::after { content: ""; width: 3px; height: 7px; border: solid #3e5380; border-width: 0 2px 2px 0; rotate: 38deg; translate: 0 -1px; }
    .snaps .toggle { gap: 4px; }
    .snaps .toggle input { width: 17px; height: 17px; border-radius: 3px; background: linear-gradient(#f6f6f6, #d8d8d8); margin-left: -2px; border-color: #777; }
    .snaps .toggle input:checked { background: #8a9298; border-color: #456a88; box-shadow: none; }
    .snaps .toggle input:checked::after { content: none; }
    .status { flex: none; display: flex; height: 17px; border-top: 1px solid #999; line-height: 18px; background: #efeceb; white-space: nowrap; }
    .cell { flex: none; }
    .plane { width: 67px; padding-left: 8px; border-right: 1px solid #ccc; }
    .coord { width: 88px; padding-left: 4px; }
    .layer { display: flex; align-items: center; gap: 2px; margin-left: 92px; width: 168px; border-right: 1px solid #ccc; }
    .swatch { width: 12px; height: 11px; background: #000; }
    .mode { width: 60px; text-align: center; line-height: 18px; border-right: 1px solid #ccc; }
    .mode.first { width: 64px; padding-left: 6px; }
    .mode.wide { width: 102px; }
    .mode.on { font-weight: bold; background: #fafafa; }
    .gh { position: absolute; left: 1017px; top: 137px; width: 560px; height: 444px; }
    .net { position: absolute; right: 4px; bottom: 6px; width: 93px; height: 38px; border-radius: 19px; background: linear-gradient(#fff, #eee); box-shadow: 0 1px 4px rgba(0,0,0,.4); display: flex; align-items: center; gap: 8px; padding-left: 2px; font: 10px/16px "Noto Sans", sans-serif; }
    .gauge { width: 34px; height: 34px; border-radius: 50%; border: 2px solid #4b9a5c; background: linear-gradient(#e9fbe4 55%, #9bdc7c 55%); display: grid; place-items: center; font-size: 10px; color: #622; }
    .rates { display: grid; grid-template-columns: 17px auto; align-items: center; }
    .corner { position: absolute; left: 0; top: 0; pointer-events: none; }
    .cy { font: 12px "Liberation Sans", sans-serif; fill: #fbd92c; }
    .cw { font: 12px "Noto Sans CJK SC", sans-serif; fill: #fff; }
  `];

  render() {
    const arrow = (d: string, c = "#333") => html`<svg width="9" height="9" viewBox="0 0 9 9" aria-hidden="true"><path d=${d} fill=${c}></path></svg>`;
    return html`
      <header class="title">
        <span>hinoceros (企业版) - [Perspective]</span>
        <span class="caps">
          <button aria-label="最小化"><svg width="12" height="10"><rect x="1" y="5" width="10" height="3" fill="#fff"></rect></svg></button>
          <button aria-label="还原"><svg width="12" height="12"><path d="M4,1.500h6.500v7" fill="none" stroke="#fff" stroke-width="1.500"></path><rect x="2" y="4" width="6" height="6" fill="none" stroke="#fff" stroke-width="2"></rect></svg></button>
          <button aria-label="关闭"><svg width="12" height="10"><path d="M2,1l8,8M10,1l-8,8" stroke="#fff" stroke-width="2.500"></path></svg></button>
        </span>
      </header>
      <nav class="menu">${["编辑(E)", "查看(V)", "曲线(C)", "曲面(S)", "实体(O)", "网格(M)", "尺寸标注(D)", "变动(T)", "工具(L)", "分析(A)", "渲染(R)", "说明(H)"].map((m) => html`<button>${m}</button>`)}</nav>
      <div class="cmd">
        <div class="hist"><span><span class="cjk">指令</span>: Grasshopper</span><svg width="17" height="17"><rect width="17" height="17" fill="#f0f0f0"></rect><path d="M6,8l2.500,-3l2.500,3zM6,14h5l-2.500,3z" fill="#333"></path></svg></div>
        <div class="entry"><label for="cmd">指令:</label><input id="cmd" autocomplete="off">
          <svg width="70" height="16"><rect x="0.500" y="1.500" width="13" height="5" fill="#eef" stroke="#99a"></rect><rect x="0.500" y="8.500" width="13" height="5" fill="#eef" stroke="#99a"></rect><path d="M4,5.500l3,-3l3,3zM4,9.500h6l-3,3z" fill="#557"></path><rect x="16" width="54" height="16" fill="#f0f0f0"></rect><path d="M26,4v7l-4,-3.500zM42,4v7l4,-3.500z" fill="#333"></path></svg>
        </div>
      </div>
      <div class="row"><div class="strip">${mainIcons.map(([n, m, a]) => html`<button aria-label=${n}>${icon(svg`${a}${m ? more(27, 26) : ""}`)}</button>`)}<svg width="1" height="1"></svg></div></div>
      <div class="row"><div class="strip second">${pluginIcons.map(([n, a]) => html`<button aria-label=${n}>${icon(svg`${a}${more(27, 26)}`)}</button>`)}</div></div>
      <div class="main">
        <div class="left"><div class="grip"><i></i><i></i></div><div class="tools">${tools.map(([n, a], i) => html`<button aria-label=${n}>${icon(svg`${a}${i ? more(24, 24) : ""}`, 24)}</button>`)}</div></div>
        <div class="center">
          <div class="view">
            <span class="vlabel">Perspective</span>
            <svg viewBox="55 144 1049 519" preserveAspectRatio="xMinYMin meet" role="img" aria-label="Perspective">${scene()}</svg>
          </div>
          <nav class="sheets">
            <button class="nav" aria-label="首页"><svg width="10" height="11"><path d="M1.500,0v11" stroke="#777" stroke-width="2"></path><path d="M9,0v11l-6,-5.500z" fill="#777"></path></svg></button>
            <button class="nav" aria-label="上一页"><svg width="10" height="11"><path d="M7,0v11l-6,-5.500z" fill="#777"></path></svg></button>
            <button class="nav" aria-label="下一页"><svg width="10" height="11"><path d="M2,0v11l6,-5.500z" fill="#000"></path></svg></button>
            <button class="nav" aria-label="末页"><svg width="10" height="11"><path d="M8.500,0v11" stroke="#000" stroke-width="2"></path><path d="M1,0v11l6,-5.500z" fill="#000"></path></svg></button>
            ${["Perspective", "Top", "Front", "Right", "布局1", "布局2"].map((t, i) => html`<button class=${classMap({ sheet: true, on: i === 0 })}>${t}<svg width="13" height="17"><path d="M2,16L10,0h2L4,16z" fill="#f0f0f0"></path><path d="M4,16L12,0M5,10L9,16.500" fill="none" stroke="#777"></path></svg></button>`)}
          </nav>
        </div>
        <aside class="side"><div class="pane">
          <div class="sheetpane"></div>
          <div class="vs">${arrow("M0,3h8l-4,4z", "#777")}</div>
          <div class="hs">${arrow("M6,1v7l-4,-3.500z")}<span class="thumb"><svg width="9" height="7"><path d="M1.500,0v7M4.500,0v7M7.500,0v7" stroke="#555"></path></svg></span>${arrow("M3,1v7l4,-3.500z")}</div>
        </div></aside>
      </div>
      <div class="snap"><div class="snaps">
        ${["端点", "最近点", "点", "中点", "中心点", "交点", "垂点", "切点", "四分点", "节点"].map((n, i) => html`<label><input type="checkbox" .checked=${[0, 5, 6, 9].includes(i)}>${n}</label>`)}
        ${["投影", "智慧轨迹", "停用"].map((n, i) => html`<label class="toggle"><input type="checkbox" .checked=${i === 1}>${n}</label>`)}
      </div></div>
      <footer class="status">
        <span class="cell plane">工作平面</span>
        <span class="cell coord">x 863.5306</span><span class="cell coord">y 398.9863</span><span class="cell coord">z 0.0000</span>
        <span class="cell layer"><i class="swatch"></i>预设值</span>
        ${([["锁定格点", "first"], ["正交", "on"], ["平面模式", ""], ["物件锁点", "on"], ["记录建构历史", "wide"]] as const).map(([n, c]) => html`<button class="mode ${c}">${n}</button>`)}
      </footer>
      <gh-window class="gh"></gh-window>
      <div class="net"><span class="gauge">38%</span>
        <span class="rates">${arrow("M4.500,0l3.500,4h-2.500v5h-2v-5h-2.500z", "#d2692c")}<span>0K/S</span>${arrow("M4.500,9l3.500,-4h-2.500v-5h-2v5h-2.500z", "#2b7a3c")}<span>0K/S</span></span>
      </div>
      <svg class="corner" width="70" height="70"><defs><linearGradient id="red" x2="1" y2="1"><stop offset="0" stop-color="#f03030"></stop><stop offset=".5" stop-color="#cf1111"></stop></linearGradient></defs>
        <path d="M0,0H68L0,68z" fill="url(#red)"></path>
        <text class="cy" x="7" y="36" transform="rotate(-42 7 36)">xuexiniu</text>
        <text class="cw" x="7" y="56" transform="rotate(-42 7 56)">学犀牛中文网</text>
      </svg>`;
  }
}
